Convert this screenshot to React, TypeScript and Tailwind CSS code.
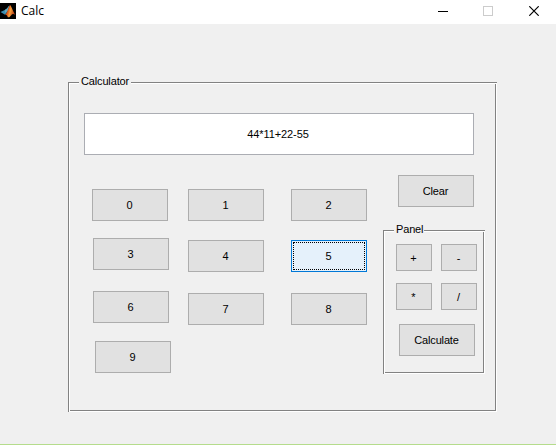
import type { ReactNode } from "react";

function Key({ label, className = "" }: { label: string; className?: string }) {
  return (
    <button
      type="button"
      className={`flex h-8 w-[76px] shrink-0 items-center justify-center border border-[#adadad] bg-[#e1e1e1] pr-px leading-3 tracking-[-0.15px] ${className}`}
    >
      {label}
    </button>
  );
}

function FocusedKey({ label, className = "" }: { label: string; className?: string }) {
  return (
    <button
      type="button"
      className={`h-8 w-[76px] shrink-0 border border-[#0078d7] bg-[#e5f1fb] p-px ${className}`}
    >
      <span className="flex h-7 w-[72px] items-center justify-center border border-dotted border-black pr-px leading-3">
        {label}
      </span>
    </button>
  );
}

function OpKey({ label }: { label: string }) {
  return (
    <button
      type="button"
      className="flex h-[27px] w-9 items-center justify-center border border-[#adadad] bg-[#e1e1e1] pr-px leading-3"
    >
      {label}
    </button>
  );
}

function EtchedPanel({
  title,
  titleClass,
  className,
  children,
}: {
  title: string;
  titleClass: string;
  className: string;
  children: ReactNode;
}) {
  return (
    <section
      className={`relative shadow-[inset_1px_1px_#828282,inset_-1px_-1px_#fff,inset_2px_2px_#fff,inset_-2px_-2px_#828282] ${className}`}
    >
      <h2 className={`absolute -top-[7px] left-[11px] h-3 whitespace-nowrap bg-[#f0f0f0] leading-3 tracking-[-0.15px] ${titleClass}`}>
        {title}
      </h2>
      {children}
    </section>
  );
}

function MatlabIcon() {
  return (
    <svg width="16" height="16" viewBox="0 0 16 16" className="block">
      <defs>
        <linearGradient id="peak" x1="0" x2="1" y1="0" y2="0.3">
          <stop offset="0" stopColor="#7a2418" />
          <stop offset="0.45" stopColor="#e8641c" />
          <stop offset="0.6" stopColor="#f6a23c" />
          <stop offset="1" stopColor="#b83a14" />
        </linearGradient>
      </defs>
      <rect width="16" height="16" fill="#000" />
      <path d="M0.5 9 L4.8 7 L7 5.5 L9.3 2.5 L8 8 L5 11.8 L3 10.5 Z" fill="#3c8db0" />
      <path d="M4.8 7 L7 5.5 L9.3 2.5 L7.5 8 L5 10 Z" fill="#64a8bd" />
      <path d="M10 2 C11.5 3 12.8 8.5 15.4 12 C13.5 10.6 12.3 10.8 11 12.4 C9.8 14 9 14.4 7.8 14.2 C7.4 12.4 6.4 11.6 5 11.7 C7.4 10 8.6 4 10 2 Z" fill="url(#peak)" />
    </svg>
  );
}

export default function App() {
  return (
    <main className="flex h-[445px] w-[556px] flex-col overflow-hidden border-b border-[#b5dc8c] bg-[#f0f0f0] font-['Liberation_Sans',Arial,sans-serif] text-[11px] text-black">
      <header className="flex h-6 shrink-0 items-start bg-white">
        <div className="pt-[3px]">
          <MatlabIcon />
        </div>
        <h1 className="ml-[5px] pt-[3px] font-['Open_Sans','Noto_Sans',sans-serif] text-[12px] leading-4">Calc</h1>
        <div className="ml-auto flex pt-[6px] pr-[17px]">
          <svg width="10" height="10" className="mr-[35px]" shapeRendering="crispEdges">
            <path d="M0 5.5H10" stroke="#000" />
          </svg>
          <svg width="10" height="10" className="mr-9" shapeRendering="crispEdges">
            <rect x="0.5" y="0.5" width="9" height="9" fill="none" stroke="#ccc" />
          </svg>
          <svg width="10" height="10">
            <path d="M0.3 0.3L9.7 9.7M9.7 0.3L0.3 9.7" stroke="#000" strokeWidth="1.2" />
          </svg>
        </div>
      </header>

      <EtchedPanel
        title="Calculator"
        titleClass="w-[52px] pl-[2px]"
        className="mt-[58px] ml-[68px] h-[330px] w-[429px] pt-[31px] pl-4"
      >
        <output className="flex h-[42px] w-[390px] items-center justify-center border border-[#abadb3] bg-white pr-[2px] leading-3 tracking-[-0.1px]">
          44*11+22-55
        </output>

        <div className="flex">
          <div className="ml-2 flex w-24 flex-col pt-[34px]">
            <Key label="0" />
            <Key label="3" className="mt-[17px] ml-px" />
            <Key label="6" className="mt-[21px] ml-px" />
            <Key label="9" className="mt-[18px] ml-[3px]" />
          </div>
          <div className="flex w-[103px] flex-col pt-[34px]">
            <Key label="1" />
            <Key label="4" className="mt-[19px]" />
            <Key label="7" className="mt-[21px]" />
          </div>
          <div className="flex w-[92px] flex-col pt-[34px]">
            <Key label="2" />
            <FocusedKey label="5" className="mt-[19px]" />
            <Key label="8" className="mt-[21px]" />
          </div>
          <div className="flex flex-col pt-5">
            <Key label="Clear" className="ml-[15px]" />
            <EtchedPanel title="Panel" titleClass="w-[30px] pl-[2px]" className="mt-[23px] h-36 w-[102px] pt-[14px] pl-[13px]">
              <div className="grid w-[81px] grid-cols-2 gap-x-[9px] gap-y-3">
                <OpKey label="+" />
                <OpKey label="-" />
                <OpKey label="*" />
                <OpKey label="/" />
              </div>
              <Key label="Calculate" className="mt-[14px] ml-[3px]" />
            </EtchedPanel>
          </div>
        </div>
      </EtchedPanel>
    </main>
  );
}
